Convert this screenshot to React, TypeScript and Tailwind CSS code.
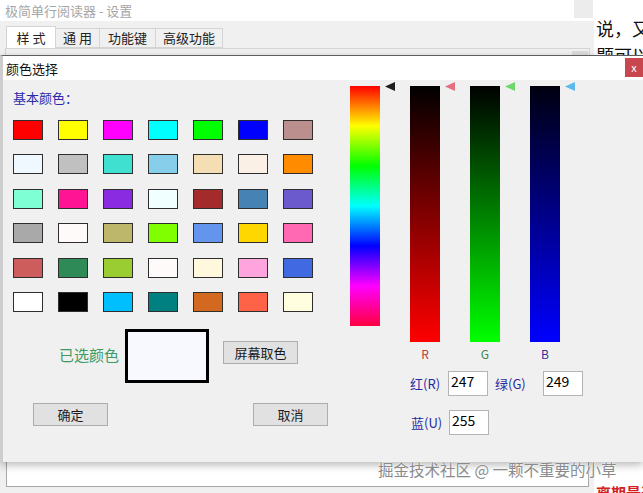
const swatches = [
  ["#ff0000", "#ffff00", "#ff00ff", "#00ffff", "#00ff00", "#0000ff", "#bc8f8f"],
  ["#f0f8ff", "#c0c0c0", "#40e0d0", "#87ceeb", "#f5deb3", "#faf0e6", "#ff8c00"],
  ["#7fffd4", "#ff1493", "#8a2be2", "#f0ffff", "#a52a2a", "#4682b4", "#6a5acd"],
  ["#a9a9a9", "#fffafa", "#bdb76b", "#7fff00", "#6495ed", "#ffd700", "#ff69b4"],
  ["#cd5c5c", "#2e8b57", "#9acd32", "#fffafa", "#fff8dc", "#ffa4dc", "#4169e1"],
  ["#ffffff", "#000000", "#00bfff", "#008080", "#d2691e", "#ff6347", "#ffffe0"],
];

function Marker({ color }: { color: string }) {
  return (
    <svg width="10" height="9" viewBox="0 0 10 9" className="absolute left-[35px] top-[-4px]">
      <polygon points="0,4.5 10,0 10,9" fill={color} />
    </svg>
  );
}

function Button({ label, className = "" }: { label: string; className?: string }) {
  return (
    <div
      className={`flex h-[23px] w-[75px] items-center justify-center border border-[#adadad] bg-[#e1e1e1] text-[13px] text-[#1a1a1a] ${className}`}
    >
      {label}
    </div>
  );
}

function Field({ value }: { value: string }) {
  return (
    <div className="h-[25px] w-[40px] border border-[#b4b4b4] bg-white pl-[2px] text-[14px] leading-[18px] text-black">
      {value}
    </div>
  );
}

export default function App() {
  return (
    <div className="relative h-[493px] w-[643px] overflow-hidden bg-white font-['Noto_Sans_CJK_SC','Noto_Sans',sans-serif]">
      {/* settings window behind */}
      <div className="flex h-[55px]">
        <div className="flex w-[594px] flex-col">
          <div className="flex h-[22px] items-start justify-between bg-white">
            <span className="pl-[5px] pt-[2px] text-[13px] leading-[18px] text-[#a6a6a6]">极简单行阅读器 - 设置</span>
            <div className="mr-[1px] h-[18px] w-[19px] bg-[#ececec]" />
          </div>
          <div className="flex flex-1 flex-col bg-[#f0f0f0] pt-[5px]">
            <div className="flex h-[22px] items-end pl-[6px] text-[13px] text-[#222]">
              <div className="flex h-[22px] w-[50px] items-center justify-center border border-b-0 border-[#d4d4d4] bg-white">样 式</div>
              <div className="flex h-[20px] w-[44px] items-center justify-center border border-l-0 border-[#d4d4d4]">通 用</div>
              <div className="flex h-[20px] w-[56px] items-center justify-center border border-l-0 border-[#d4d4d4]">功能键</div>
              <div className="flex h-[20px] w-[67px] items-center justify-center border border-l-0 border-[#d4d4d4]">高级功能</div>
            </div>
            <div className="ml-[5px] mr-[4px] flex flex-1 justify-end border-t border-l border-r border-[#d4d4d4] bg-[#f0f0f0]">
              <div className="mr-[1px] mt-[2px] h-[4px] w-[16px] bg-[#dcdcdc]" />
            </div>
          </div>
        </div>
        <div className="flex-1 overflow-hidden whitespace-nowrap pl-[2px] pt-[15px] text-[18px] leading-[27px] text-[#111]">
          <div>说，又什么</div>
          <div>题可以看</div>
        </div>
      </div>

      {/* color dialog */}
      <div className="relative z-10 flex h-[407px] flex-col border-l-[3px] border-t border-l-[#cdcdcd] border-t-[#5e5e5e] shadow-[0_3px_8px_rgba(0,0,0,0.28)]">
        <div className="flex h-[24px] items-start justify-between bg-white">
          <span className="pl-[3px] pt-[4px] text-[13px] leading-[17px] text-[#111]">颜色选择</span>
          <div className="mt-[2px] flex h-[19px] w-[18px] items-center justify-center bg-[#c8464d] text-[11px] leading-none text-white">
            x
          </div>
        </div>
        <div className="flex flex-1 bg-[#f0f0f0]">
          {/* left: basic colors */}
          <div className="flex w-[347px] flex-col pl-[10px]">
            <div className="mt-[10px] text-[13px] leading-[16px] text-[#2a2aa8]">基本颜色：</div>
            <div className="mt-[14px] grid grid-cols-[repeat(7,30px)] gap-x-[15px] gap-y-[14.4px]">
              {swatches.flat().map((c, i) => (
                <div key={i} className="h-[20px] w-[30px] border border-[#2e2e2e]" style={{ backgroundColor: c }} />
              ))}
            </div>
            <div className="mt-[17px] flex items-start">
              <span className="ml-[46px] mt-[16px] w-[60px] text-[15px] leading-[20px] text-[#3c9a63]">已选颜色</span>
              <div className="ml-[6px] h-[54px] w-[84px] border-[3px] border-black bg-[#f7f9ff]" />
              <Button label="屏幕取色" className="ml-[14px] mt-[12px]" />
            </div>
            <div className="mt-[20px] flex">
              <Button label="确定" className="ml-[20px]" />
              <Button label="取消" className="ml-[145px]" />
            </div>
          </div>

          {/* right: hue and rgb bars */}
          <div className="flex pt-[6px]">
            <div className="w-[60px]">
              <div className="relative h-[240px] w-[30px] bg-[linear-gradient(to_bottom,#ff0000,#ffff00,#00ff00,#00ffff,#0000ff,#ff00ff,#ff0040)]">
                <Marker color="#1e1e1e" />
              </div>
            </div>
            <div className="flex flex-col">
              <div className="flex">
                <div className="w-[60px]">
                  <div className="relative h-[256px] w-[30px] bg-[linear-gradient(to_bottom,#000000,#ff0000)]">
                    <Marker color="#e47080" />
                  </div>
                  <div className="mt-[5px] w-[30px] text-center text-[12px] leading-[14px] text-[#c03838]">R</div>
                </div>
                <div className="w-[60px]">
                  <div className="relative h-[256px] w-[30px] bg-[linear-gradient(to_bottom,#000000,#00ff00)]">
                    <Marker color="#6cd86c" />
                  </div>
                  <div className="mt-[5px] w-[30px] text-center text-[12px] leading-[14px] text-[#3a8a4a]">G</div>
                </div>
                <div className="w-[60px]">
                  <div className="relative h-[256px] w-[30px] bg-[linear-gradient(to_bottom,#000010,#0000ff)]">
                    <Marker color="#5fb9ec" />
                  </div>
                  <div className="mt-[5px] w-[30px] text-center text-[12px] leading-[14px] text-[#3030a8]">B</div>
                </div>
              </div>
              <div className="mt-[10px] flex items-start text-[13px] text-[#2a2aa0]">
                <span className="w-[38px] pt-[4px] leading-[17px]">红(R)</span>
                <Field value="247" />
                <span className="ml-[7px] w-[48px] pt-[4px] leading-[17px]">绿(G)</span>
                <Field value="249" />
              </div>
              <div className="mt-[14px] flex items-start text-[13px] text-[#2a2aa0]">
                <span className="ml-[1px] w-[38px] pt-[4px] leading-[17px]">蓝(U)</span>
                <Field value="255" />
              </div>
            </div>
          </div>
        </div>
      </div>

      {/* bottom of settings window */}
      <div className="flex h-[31px]">
        <div className="w-[594px] bg-[#f0f0f0] pl-[6px] pr-[5px]">
          <div className="h-[25px] border-b border-l border-r border-[#a8a8a8] bg-white" />
        </div>
        <div className="flex-1 overflow-hidden whitespace-nowrap pl-[2px] pt-[22px] text-[15px] font-bold leading-[18px] text-[#d42020]">
          离期最近
        </div>
      </div>

      {/* watermark */}
      <div className="absolute left-[378px] top-[459px] z-20 whitespace-nowrap text-[15.5px] leading-[20px] text-[#8a8a8a] [text-shadow:0_0_2px_#fff,0_0_1px_#fff]">
        掘金技术社区 @ 一颗不重要的小草
      </div>
    </div>
  );
}
